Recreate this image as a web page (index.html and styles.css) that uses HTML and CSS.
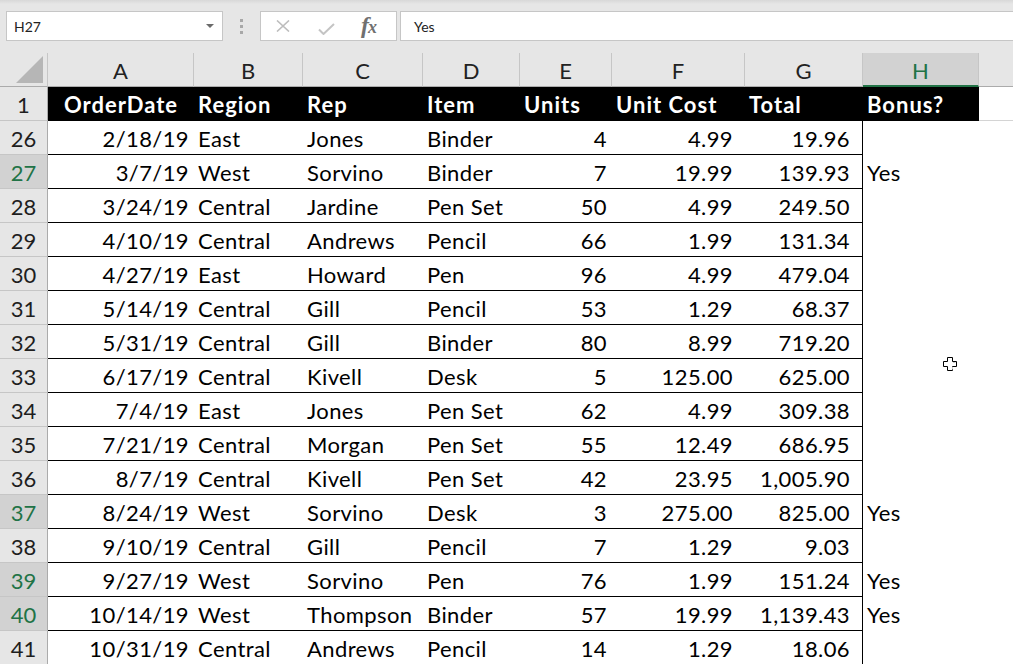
FILE: index.html
```html
<!DOCTYPE html>
<html lang="en">
<head>
<meta charset="utf-8">
<title>Sheet</title>
<link rel="stylesheet" href="styles.css">
</head>
<body>
<div class="fbar">
  <div class="namebox"><span>H27</span><svg class="dd" width="8" height="5" viewBox="0 0 8 5"><path d="M0 0h8L4 4z" fill="#6a6a6a"/></svg></div>
  <div class="grip"><i></i><i></i><i></i></div>
  <div class="fnbox">
    <svg width="14" height="12" viewBox="0 0 14 12"><path d="M1 0.5L13 11.5M13 0.5L1 11.5" stroke="#bdbdbd" stroke-width="1.6" fill="none"/></svg>
    <svg width="17" height="12" viewBox="0 0 17 12"><path d="M1 6.5L5.5 11L16 1" stroke="#c4c4c4" stroke-width="2" fill="none"/></svg>
    <span class="fx">f<small>x</small></span>
  </div>
  <div class="formula">Yes</div>
</div>
<div class="sheet">
  <div class="row colhead">
    <div class="corner"><svg width="28" height="27" viewBox="0 0 28 27"><path d="M27 0V27H0z" fill="#b6b6b6"/></svg></div>
    <div class="ch">A</div><div class="ch">B</div><div class="ch">C</div><div class="ch">D</div>
    <div class="ch">E</div><div class="ch">F</div><div class="ch">G</div><div class="ch sel">H</div>
    <div class="rest"></div>
  </div>
  <div class="row titles">
    <div class="rh">1</div>
    <div class="hd ctr">OrderDate</div><div class="hd">Region</div><div class="hd">Rep</div><div class="hd">Item</div>
    <div class="hd">Units</div><div class="hd">Unit Cost</div><div class="hd">Total</div><div class="hd">Bonus?</div>
    <div class="rest line"></div>
  </div>
  <div class="row"><div class="rh">26</div><div class="c r">2/18/19</div><div class="c">East</div><div class="c">Jones</div><div class="c">Binder</div><div class="c r">4</div><div class="c n">4.99</div><div class="c n g">19.96</div><div class="c h"></div><div></div></div>
  <div class="row"><div class="rh sel">27</div><div class="c r">3/7/19</div><div class="c">West</div><div class="c">Sorvino</div><div class="c">Binder</div><div class="c r">7</div><div class="c n">19.99</div><div class="c n g">139.93</div><div class="c h">Yes</div><div></div></div>
  <div class="row"><div class="rh">28</div><div class="c r">3/24/19</div><div class="c">Central</div><div class="c">Jardine</div><div class="c">Pen Set</div><div class="c r">50</div><div class="c n">4.99</div><div class="c n g">249.50</div><div class="c h"></div><div></div></div>
  <div class="row"><div class="rh">29</div><div class="c r">4/10/19</div><div class="c">Central</div><div class="c">Andrews</div><div class="c">Pencil</div><div class="c r">66</div><div class="c n">1.99</div><div class="c n g">131.34</div><div class="c h"></div><div></div></div>
  <div class="row"><div class="rh">30</div><div class="c r">4/27/19</div><div class="c">East</div><div class="c">Howard</div><div class="c">Pen</div><div class="c r">96</div><div class="c n">4.99</div><div class="c n g">479.04</div><div class="c h"></div><div></div></div>
  <div class="row"><div class="rh">31</div><div class="c r">5/14/19</div><div class="c">Central</div><div class="c">Gill</div><div class="c">Pencil</div><div class="c r">53</div><div class="c n">1.29</div><div class="c n g">68.37</div><div class="c h"></div><div></div></div>
  <div class="row"><div class="rh">32</div><div class="c r">5/31/19</div><div class="c">Central</div><div class="c">Gill</div><div class="c">Binder</div><div class="c r">80</div><div class="c n">8.99</div><div class="c n g">719.20</div><div class="c h"></div><div></div></div>
  <div class="row"><div class="rh">33</div><div class="c r">6/17/19</div><div class="c">Central</div><div class="c">Kivell</div><div class="c">Desk</div><div class="c r">5</div><div class="c n">125.00</div><div class="c n g">625.00</div><div class="c h"></div><div></div></div>
  <div class="row"><div class="rh">34</div><div class="c r">7/4/19</div><div class="c">East</div><div class="c">Jones</div><div class="c">Pen Set</div><div class="c r">62</div><div class="c n">4.99</div><div class="c n g">309.38</div><div class="c h"></div><div></div></div>
  <div class="row"><div class="rh">35</div><div class="c r">7/21/19</div><div class="c">Central</div><div class="c">Morgan</div><div class="c">Pen Set</div><div class="c r">55</div><div class="c n">12.49</div><div class="c n g">686.95</div><div class="c h"></div><div></div></div>
  <div class="row"><div class="rh">36</div><div class="c r">8/7/19</div><div class="c">Central</div><div class="c">Kivell</div><div class="c">Pen Set</div><div class="c r">42</div><div class="c n">23.95</div><div class="c n g">1,005.90</div><div class="c h"></div><div></div></div>
  <div class="row"><div class="rh sel">37</div><div class="c r">8/24/19</div><div class="c">West</div><div class="c">Sorvino</div><div class="c">Desk</div><div class="c r">3</div><div class="c n">275.00</div><div class="c n g">825.00</div><div class="c h">Yes</div><div></div></div>
  <div class="row"><div class="rh">38</div><div class="c r">9/10/19</div><div class="c">Central</div><div class="c">Gill</div><div class="c">Pencil</div><div class="c r">7</div><div class="c n">1.29</div><div class="c n g">9.03</div><div class="c h"></div><div></div></div>
  <div class="row"><div class="rh sel">39</div><div class="c r">9/27/19</div><div class="c">West</div><div class="c">Sorvino</div><div class="c">Pen</div><div class="c r">76</div><div class="c n">1.99</div><div class="c n g">151.24</div><div class="c h">Yes</div><div></div></div>
  <div class="row"><div class="rh sel">40</div><div class="c r">10/14/19</div><div class="c">West</div><div class="c">Thompson</div><div class="c">Binder</div><div class="c r">57</div><div class="c n">19.99</div><div class="c n g">1,139.43</div><div class="c h">Yes</div><div></div></div>
  <div class="row"><div class="rh">41</div><div class="c r">10/31/19</div><div class="c">Central</div><div class="c">Andrews</div><div class="c">Pencil</div><div class="c r">14</div><div class="c n">1.29</div><div class="c n g">18.06</div><div class="c h"></div><div></div></div>
</div>
<svg class="cursor" width="15" height="15" viewBox="0 0 15 15"><path d="M4.5 0.5h5v4h4v5h-4v4h-5v-4h-4v-5h4z" fill="#fff" stroke="#000" stroke-width="1"/><path d="M10 5h2.5v1H10zM10 10v2.5H9V10z" fill="#c8c8c8"/></svg>
</body>
</html>
```
FILE: styles.css
```css
* { box-sizing: border-box; margin: 0; padding: 0; }
html, body { width: 1013px; height: 664px; overflow: hidden; background: #fff; }
body { font-family: Lato, "Liberation Sans", sans-serif; position: relative; color: #000; }

.fbar {
  height: 53px;
  background: linear-gradient(#d8d8d8 0, #e6e6e6 4px, #e6e6e6 100%);
  display: flex;
  align-items: flex-start;
  padding: 11px 0 0 6px;
  font-size: 14px;
  color: #222;
}
.namebox {
  width: 217px; height: 30px;
  background: #fff; border: 1px solid #c6c6c6;
  display: flex; align-items: center; justify-content: space-between;
  padding: 1px 8px 0 7px;
}
.grip {
  width: 37px; height: 30px;
  display: flex; flex-direction: column; align-items: center; justify-content: center; gap: 3px;
}
.grip i { display: block; width: 3px; height: 3px; background: #a8a8a8; }
.fnbox {
  width: 137px; height: 30px;
  background: #fff; border: 1px solid #c6c6c6;
  display: flex; align-items: center; gap: 28px;
  padding: 0 0 0 15px;
}
.fnbox svg:nth-child(2) { margin-top: 6px; }
.fx {
  font-family: "Liberation Serif", serif; font-style: italic; font-weight: 700;
  font-size: 24px; line-height: 24px; color: #707070; letter-spacing: -1px;
  margin-left: -2px;
}
.fx small { font-size: 18px; }
.formula {
  flex: 1; height: 30px; margin-left: 3px;
  background: #fff; border: 1px solid #c6c6c6; border-right: 0;
  display: flex; align-items: center; padding: 1px 0 0 13px;
}

.row {
  display: grid;
  grid-template-columns: 48px 146px 109px 120px 97px 92px 133px 118px 116px 1fr;
  grid-template-rows: 34px;
  height: 34px;
  font-size: 22px;
  line-height: 33px;
  letter-spacing: 0.4px;
  white-space: nowrap;
}
.row > div { padding-top: 1px; }
.colhead .corner, .colhead .ch {
  background: #e6e6e6;
  border-right: 1px solid #c6c6c6;
  border-bottom: 1px solid #ababab;
}
.colhead .corner { display: flex; align-items: flex-end; justify-content: flex-end; padding: 0 3px 3px 0; }
.corner svg { display: block; }
.ch { text-align: center; color: #222; letter-spacing: 0; }
.ch.sel { background: #d2d2d2; color: #217346; border-bottom: 2px solid #217346; }
.colhead .rest { background: #e6e6e6; border-bottom: 1px solid #ababab; }

.rh {
  background: #e6e6e6;
  border-right: 1px solid #ababab;
  border-bottom: 1px solid #c6c6c6;
  text-align: center;
  color: #1e1e1e;
  letter-spacing: 0;
}
.rh.sel { background: #d2d2d2; color: #217346; }

.hd {
  background: #000; color: #fff; font-weight: 700;
  letter-spacing: 1px;
  padding-left: 4px;
}
.row > .hd.ctr { text-align: center; padding-left: 0; }
.titles .rest.line { border-bottom: 1px solid #d4d4d4; }

.c { padding-left: 4px; border-bottom: 1px solid #000; }
.c.r { text-align: right; padding-right: 5px; }
.c.n { text-align: right; padding-right: 12px; }
.c.g { border-right: 1px solid #000; }
.c.h { border-bottom: 0; }

.cursor { position: absolute; left: 943px; top: 357px; }
```
